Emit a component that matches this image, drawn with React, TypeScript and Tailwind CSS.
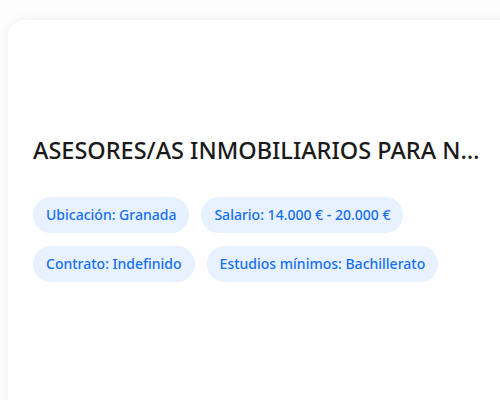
export default function App() {
  const tags = [
    "Ubicación: Granada",
    "Salario: 14.000 € - 20.000 €",
    "Contrato: Indefinido",
    "Estudios mínimos: Bachillerato",
  ]
  return (
    <div className="w-[500px] h-[400px] overflow-hidden bg-[#fdfdfd] pt-5 pl-2" style={{ fontFamily: '"Noto Sans", Arial, sans-serif' }}>
      <div className="w-[520px] h-[420px] bg-white rounded-2xl shadow-[0_0_12px_rgba(0,0,0,0.06)] pl-[25px] pr-[42px] pt-[114px]">
        <h2 className="text-[23.5px] leading-8 font-medium text-[#1a1a1a] truncate">
          ASESORES/AS INMOBILIARIOS PARA NUEVA OFICINA EN GRANADA
        </h2>
        <div className="flex flex-wrap gap-x-3 gap-y-[13px] mt-[31px]">
          {tags.map((t) => (
            <span key={t} className="bg-[#e7f1ff] text-[#1570ef] text-sm font-medium leading-5 px-[13px] py-2 rounded-full">
              {t}
            </span>
          ))}
        </div>
      </div>
    </div>
  )
}
